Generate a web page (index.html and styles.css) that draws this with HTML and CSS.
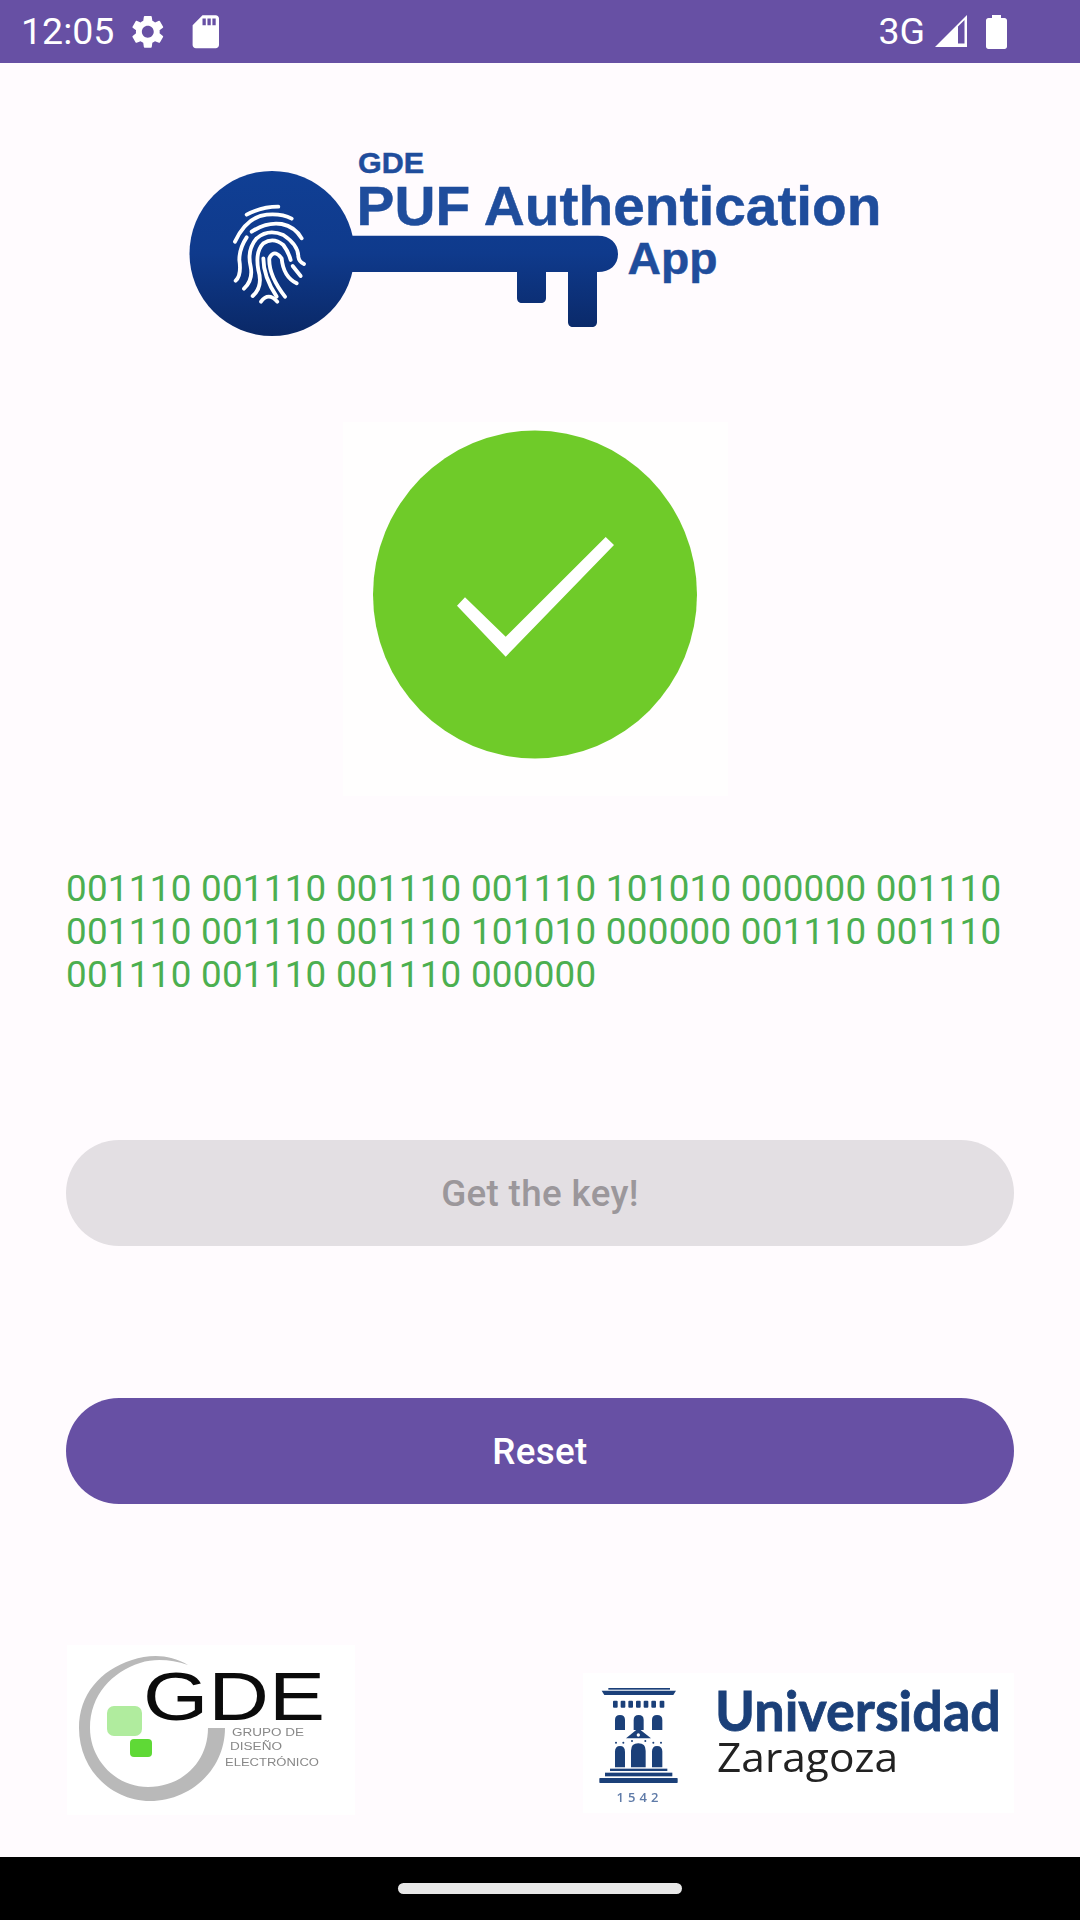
FILE: index.html
```html
<!DOCTYPE html>
<html lang="en">
<head>
<meta charset="utf-8">
<title>GDE PUF Authentication App</title>
<link rel="stylesheet" href="styles.css">
</head>
<body>
<div class="screen">
  <header class="status">
    <span class="status-time">12:05</span>
    <svg class="ic-gear" viewBox="0 0 24 24"><path d="M19.14 12.94c.04-.3.06-.61.06-.94 0-.32-.02-.64-.07-.94l2.03-1.58a.49.49 0 0 0 .12-.61l-1.92-3.32a.488.488 0 0 0-.59-.22l-2.39.96c-.5-.38-1.03-.7-1.62-.94l-.36-2.54a.484.484 0 0 0-.48-.41h-3.84c-.24 0-.43.17-.47.41l-.36 2.54c-.59.24-1.13.57-1.62.94l-2.39-.96c-.22-.08-.47 0-.59.22L2.74 8.87c-.12.21-.08.47.12.61l2.03 1.58c-.05.3-.09.63-.09.94s.02.64.07.94l-2.03 1.58a.49.49 0 0 0-.12.61l1.92 3.32c.12.22.37.29.59.22l2.39-.96c.5.38 1.03.7 1.62.94l.36 2.54c.05.24.24.41.48.41h3.84c.24 0 .44-.17.47-.41l.36-2.54c.59-.24 1.13-.56 1.62-.94l2.39.96c.22.08.47 0 .59-.22l1.92-3.32c.12-.22.07-.47-.12-.61l-2.01-1.58zM12 15.6c-1.98 0-3.6-1.62-3.6-3.6s1.62-3.6 3.6-3.6 3.6 1.62 3.6 3.6-1.62 3.6-3.6 3.6z"/></svg>
    <svg class="ic-sd" viewBox="0 0 24 24"><path d="M18 2h-8L4.02 8 4 20c0 1.1.9 2 2 2h12c1.1 0 2-.9 2-2V4c0-1.1-.9-2-2-2zm-6 6h-2V4h2v4zm3 0h-2V4h2v4zm3 0h-2V4h2v4z"/></svg>
    <span class="status-gap"></span>
    <span class="status-net">3G</span>
    <svg class="ic-signal" viewBox="0 0 33 33"><path fill-rule="evenodd" d="M0 32 32 0V32ZM23 11.500V28.500H29.500V5Z"/></svg>
    <svg class="ic-battery" viewBox="0 0 21 34"><path d="M6 0h9v3h3.500c1.400 0 2.500 1.100 2.500 2.500V31.500c0 1.400-1.100 2.500-2.500 2.500H2.500C1.100 34 0 32.900 0 31.500V5.500C0 4.100 1.100 3 2.500 3H6Z"/></svg>
  </header>

  <main class="content">
    <svg class="app-logo" viewBox="170 130 730 220">
      <defs>
        <linearGradient id="keyFill" gradientUnits="userSpaceOnUse" x1="0" y1="171" x2="0" y2="336">
          <stop offset="0" stop-color="#103f94"/>
          <stop offset="0.5" stop-color="#0f3a8c"/>
          <stop offset="1" stop-color="#0a2866"/>
        </linearGradient>
      </defs>
      <path fill="url(#keyFill)" d="M330 235.700H598C610 235.700 618 243 618 254C618 265 610 272 598 272H597V322C597 325 595 327 592 327H573C570 327 568 325 568 322V272H546V298C546 301 544 303 541 303H522C519 303 517 301 517 298V272H330Z"/>
      <circle cx="272" cy="253.500" r="82.500" fill="url(#keyFill)"/>
      <g class="print" transform="translate(200 180) scale(.33333)">
        <path d="M140 104Q185 80 235 80"/>
        <path d="M105 185Q140 110 200 104Q245 100 275 116"/>
        <path d="M155 155Q200 125 245 132Q285 140 305 175"/>
        <path d="M140 172Q118 205 118 240Q125 285 107 302"/>
        <path d="M132 326Q160 300 152 260Q140 210 170 175Q205 145 250 165Q295 195 295 230Q297 245 312 252"/>
        <path d="M158 348Q190 320 175 270Q165 215 190 190Q220 170 250 195Q265 215 272 240"/>
        <path d="M230 350Q190 290 190 235"/>
        <path d="M255 350Q205 285 208 235Q222 205 245 235Q250 290 290 310"/>
        <path d="M278 258L302 288"/>
        <path d="M183 365Q205 335 232 365"/>
      </g>
      <text class="logo-text gde" x="358" y="173" textLength="66" lengthAdjust="spacingAndGlyphs">GDE</text>
      <text class="logo-text puf" x="356.500" y="225" textLength="525" lengthAdjust="spacingAndGlyphs">PUF Authentication</text>
      <text class="logo-text app" x="627.500" y="274" textLength="90" lengthAdjust="spacingAndGlyphs">App</text>
    </svg>

    <svg class="status-mark" viewBox="343 422 385 374">
      <ellipse cx="535" cy="594.500" rx="162" ry="164" fill="#6fcb29"/>
      <path fill="#fff" d="M465 597.300L505.700 636.700L605.700 537L614 545L505.700 656.700L457 605.700Z"/>
    </svg>

    <p class="key-bits">001110 001110 001110 001110 101010 000000 001110 001110 001110 001110 101010 000000 001110 001110 001110 001110 001110 000000</p>

    <div class="btn btn-off">Get the key!</div>
    <div class="btn btn-on">Reset</div>

    <div class="sponsors">
      <svg class="gde-logo" viewBox="67 1645 288 170">
        <rect x="67" y="1645" width="288" height="170" fill="#fff"/>
        <path fill="#b9b9b9" d="M188 1665C170 1654 150 1654 132 1660C100 1670 79 1695 79 1728C79 1770 112 1801 150 1801C190 1801 225 1770 225 1728H208C208 1762 182 1787 148 1787C116 1787 90 1760 90 1728C90 1695 112 1672 140 1663C156 1658 172 1660 188 1665Z"/>
        <rect x="107" y="1706" width="35" height="30" rx="7" fill="#b0ec9e"/>
        <rect x="130" y="1739" width="22" height="18" rx="4" fill="#5fd936"/>
        <text class="gde-big" x="143" y="1720" textLength="182" lengthAdjust="spacingAndGlyphs">GDE</text>
        <text class="gde-small" x="232" y="1736" textLength="72" lengthAdjust="spacingAndGlyphs">GRUPO DE</text>
        <text class="gde-small" x="230" y="1750" textLength="52" lengthAdjust="spacingAndGlyphs">DISEÑO</text>
        <text class="gde-small" x="225" y="1766" textLength="94" lengthAdjust="spacingAndGlyphs">ELECTRÓNICO</text>
      </svg>
      <svg class="uz-logo" viewBox="583 1673 431 140">
        <rect x="583" y="1673" width="431" height="140" fill="#fff"/>
        <g class="uz-mark" transform="translate(570 1660) scale(.33333)">
          <rect x="115" y="84" width="185" height="5"/>
          <path d="M95 92H318L310 105H103Z"/>
          <rect x="129" y="122" width="14" height="21" rx="3"/>
          <rect x="152" y="122" width="14" height="21" rx="3"/>
          <rect x="175" y="122" width="14" height="21" rx="3"/>
          <rect x="198" y="122" width="14" height="21" rx="3"/>
          <rect x="221" y="122" width="14" height="21" rx="3"/>
          <rect x="244" y="122" width="14" height="21" rx="3"/>
          <rect x="269" y="122" width="14" height="21" rx="3"/>
          <path d="M135 210V180Q135 165 150 165Q165 165 165 180V210Z"/>
          <path d="M191 210V180Q191 165 206 165Q221 165 221 180V210Z"/>
          <path d="M246 210V180Q246 165 261 165Q277 165 277 180V210Z"/>
          <path fill-rule="evenodd" d="M168 235L205 205L243 235ZM200 225a5 5 0 1 0 10 0a5 5 0 1 0 -10 0Z"/>
          <circle cx="138" cy="248" r="3"/>
          <circle cx="160" cy="248" r="3"/>
          <circle cx="186" cy="243" r="3"/>
          <circle cx="226" cy="243" r="3"/>
          <circle cx="250" cy="248" r="3"/>
          <circle cx="273" cy="248" r="3"/>
          <path d="M135 322V275Q135 258 150 258Q165 258 165 275V322Z"/>
          <path d="M183 322V272Q183 250 205 250Q227 250 227 272V322Z"/>
          <path d="M246 322V275Q246 258 261 258Q277 258 277 275V322Z"/>
          <rect x="120" y="326" width="172" height="7"/>
          <rect x="105" y="338" width="202" height="11"/>
          <rect x="88" y="354" width="235" height="15" rx="2"/>
        </g>
        <text class="uz-year" x="616.500" y="1802" textLength="42">1542</text>
        <text class="uz-name" x="715" y="1731" textLength="286" lengthAdjust="spacingAndGlyphs">Universidad</text>
        <text class="uz-city" x="717" y="1772" textLength="181" lengthAdjust="spacingAndGlyphs">Zaragoza</text>
      </svg>
    </div>
  </main>

  <footer class="nav"><span class="nav-handle"></span></footer>
</div>
</body>
</html>
```
FILE: styles.css
```css
* { box-sizing: border-box; }
html, body { margin: 0; padding: 0; }
body { background: #fffbfe; font-family: Roboto, "Noto Sans", sans-serif; }
svg { display: block; }

.screen { width: 1080px; height: 1920px; display: flex; flex-direction: column; overflow: hidden; }

.status { height: 63px; flex: none; background: #6750a4; color: #fff; display: flex; align-items: center; font-size: 37.500px; line-height: 43px; padding: 0 0 0 21px; }
.status svg { fill: #fff; flex: none; }
.status-time { width: 92px; }
.ic-gear { width: 39.600px; height: 39.600px; margin-left: 15px; }
.ic-sd { width: 39.600px; height: 39.600px; margin-left: 18px; }
.status-gap { flex: 1; }
.status-net { margin-right: 10px; }
.ic-signal { width: 33px; height: 33px; margin-right: 18px; }
.ic-battery { width: 21px; height: 34px; margin-right: 73px; }

.content { flex: 1; padding: 0 66px; display: flex; flex-direction: column; }

.app-logo { width: 730px; height: 220px; margin: 67px 0 0 104px; }
.print { fill: none; stroke: #fff; stroke-width: 11.500; stroke-linecap: round; stroke-linejoin: round; }
.logo-text { font-family: "Liberation Sans", Arial, sans-serif; font-weight: 700; fill: #1f4d9c; stroke: #1f4d9c; stroke-width: .5px; }
.gde { font-size: 30px; }
.puf { font-size: 56.200px; }
.app { font-size: 45px; }

.status-mark { width: 385px; height: 374px; margin: 72px 0 0 277px; background: #fffefe; }

.key-bits { margin: 71px 0 0; font-size: 36.75px; line-height: 43px; letter-spacing: .275px; color: #4caf50; }

.btn { height: 106px; border-radius: 53px; display: flex; align-items: center; justify-content: center; font-size: 36.75px; font-weight: 500; letter-spacing: .35px; }
.btn-off { margin-top: 144px; background: #e3dfe3; color: #9b979b; }
.btn-on { margin-top: 152px; background: #6750a4; color: #fff; }

.sponsors { margin-top: 141px; display: flex; justify-content: space-between; align-items: flex-start; }
.gde-logo { width: 288px; height: 170px; margin-left: 1px; filter: blur(.6px); }
.gde-big { font-family: "Liberation Sans", Arial, sans-serif; font-size: 68px; fill: #0b0b0b; }
.gde-small { font-family: "Liberation Sans", Arial, sans-serif; font-size: 10px; fill: #888; }
.uz-logo { width: 431px; height: 140px; margin-top: 28px; filter: blur(.5px); }
.uz-mark { fill: #1b4079; }
.uz-year { font-family: "Open Sans", sans-serif; font-weight: 600; font-size: 13px; fill: #5f7ba8; }
.uz-name { font-family: Lato, "Open Sans", sans-serif; font-weight: 700; font-size: 55px; fill: #1b4079; stroke: #1b4079; stroke-width: .8px; }
.uz-city { font-family: "Open Sans", sans-serif; font-size: 40px; fill: #222; }

.nav { height: 63px; flex: none; background: #000; display: flex; justify-content: center; align-items: center; }
.nav-handle { width: 284px; height: 11px; border-radius: 6px; background: #e8e8e8; }
```
